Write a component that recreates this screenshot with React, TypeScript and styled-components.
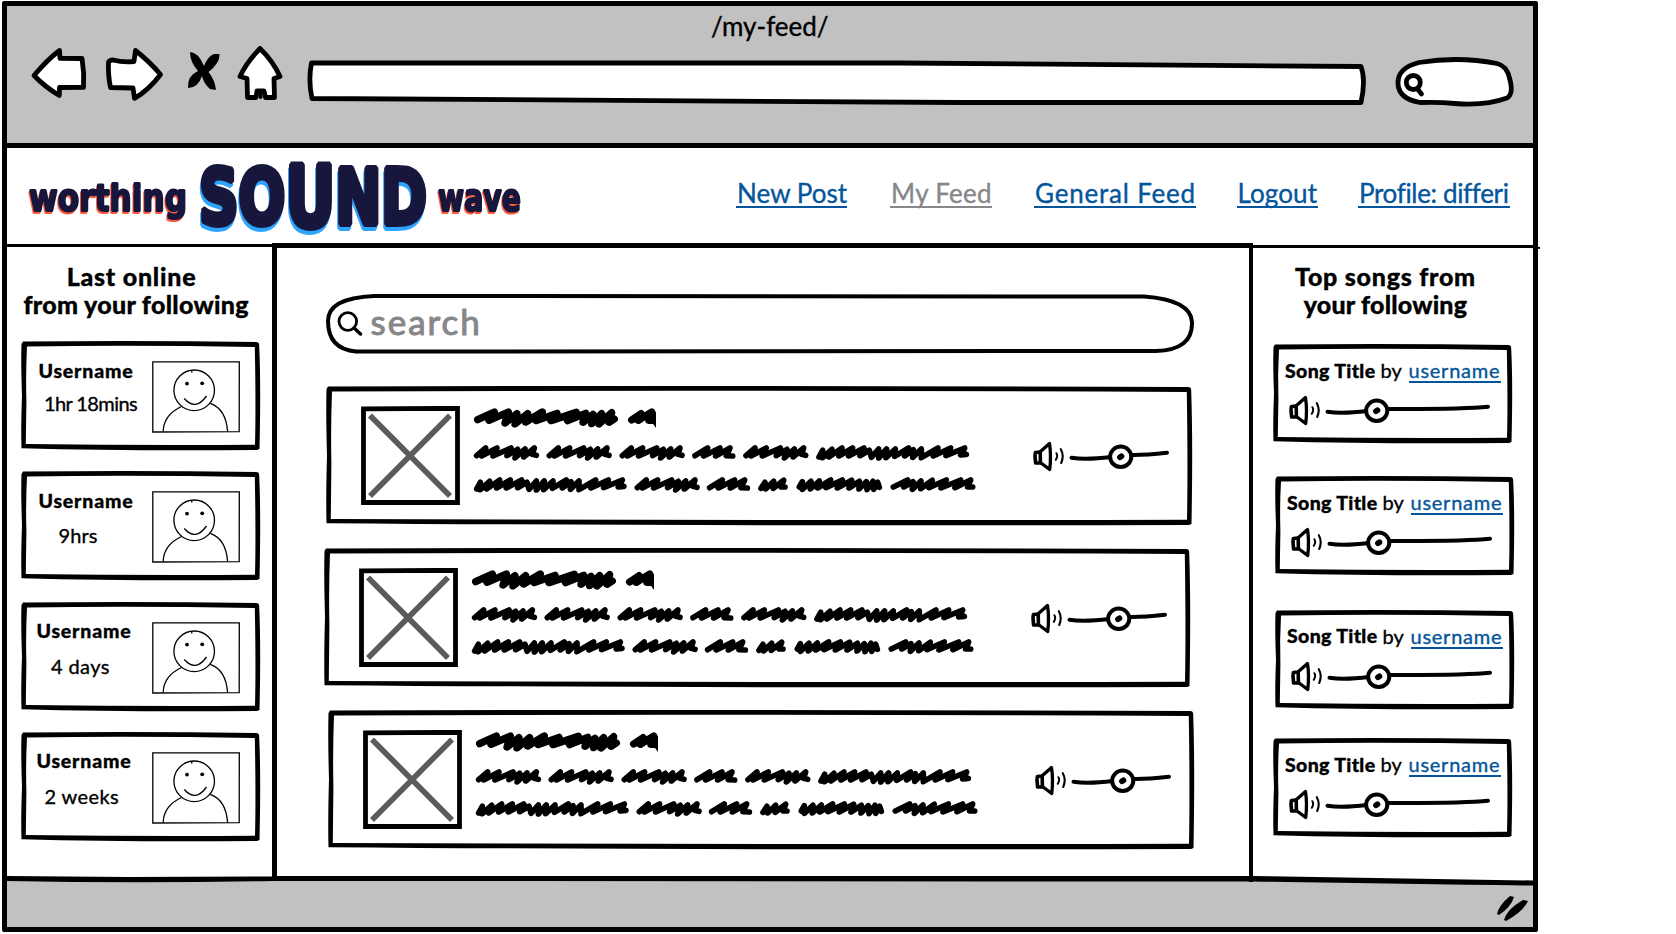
import React from "react";
import styled, { createGlobalStyle, css } from "styled-components";

const GlobalStyle = createGlobalStyle`
  * { box-sizing: border-box; }
  body {
    margin: 0;
    background: #fff;
    color: #000;
    font-family: Lato, "Open Sans", sans-serif;
    -webkit-text-stroke: 0.35px currentColor;
  }
  svg { display: block; flex: none; }
`;

const Window = styled.div`
  position: relative;
  display: flex;
  flex-direction: column;
  width: 1536px;
  height: 931px;
  margin: 1px 0 0 2px;
  border: 5px solid #000;
  border-radius: 2px;
  background: #fff;
`;

const Toolbar = styled.header`
  height: 142px;
  border-bottom: 5px solid #000;
  background: #c1c1c1;
`;

const PageTitle = styled.div`
  height: 40px;
  padding: 4px 0 0 704px;
  font-size: 26px;
  line-height: 32px;
  letter-spacing: 0;
`;

const Controls = styled.div`
  display: flex;
  align-items: flex-start;
`;

const SiteHeader = styled.div`
  display: flex;
  height: 95px;
`;

const Nav = styled.nav`
  display: flex;
  padding: 28.5px 0 0 188px;
`;

const NavLink = styled.a<{ $w: number; $gap: number; $ls: number; $active?: boolean }>`
  height: 31px;
  width: ${(p) => p.$w}px;
  margin-right: ${(p) => p.$gap}px;
  padding-left: 1px;
  border-bottom: 2px solid currentColor;
  color: ${(p) => (p.$active ? "#87868a" : "#04559b")};
  font-size: 26px;
  line-height: 32px;
  letter-spacing: ${(p) => p.$ls}px;
  white-space: nowrap;
`;

const Body = styled.main`
  display: grid;
  grid-template-columns: 265px 981px 280px;
  height: 638px;
`;

const Side = styled.aside<{ $right?: boolean }>`
  position: relative;
  margin-top: ${(p) => (p.$right ? 2 : 1)}px;
  border-top: 3px solid #000;
  padding: ${(p) => (p.$right ? "13.5px 0 0 20px" : "14.5px 0 0 13.5px")};
`;

const SideTitle = styled.h2<{ $right?: boolean }>`
  margin: 0;
  width: ${(p) => (p.$right ? 225 : 222)}px;
  height: ${(p) => (p.$right ? 82.5 : 79)}px;
  text-align: center;
  font-size: 25px;
  font-weight: 900;
  line-height: 28px;
  white-space: nowrap;
`;

const TitleLine = styled.span<{ $ls: number; $indent?: number }>`
  display: block;
  padding-left: ${(p) => p.$indent ?? 0}px;
  letter-spacing: ${(p) => p.$ls}px;
`;

const Overhang = styled.svg`
  position: absolute;
  top: -3px;
  right: -7px;
`;

const Center = styled.section`
  border: solid #000;
  border-width: 5px 4px 0 5px;
  padding: 46px 0 0 49px;
`;

const framed = css`
  position: relative;
  display: flex;
`;

const FrameSvg = styled.svg`
  position: absolute;
  inset: 0;
  overflow: visible;
`;

const OnlineCard = styled.article<{ $gap: number }>`
  ${framed}
  width: 239px;
  height: 109px;
  margin-bottom: ${(p) => p.$gap}px;
`;

const OnlineText = styled.div<{ $pad: number; $top: number }>`
  width: 131.5px;
  padding: ${(p) => p.$top}px 0 0 ${(p) => p.$pad}px;
  white-space: nowrap;
`;

const Strong = styled.strong`
  display: block;
  font-size: 19.5px;
  font-weight: 900;
  line-height: 24px;
  letter-spacing: 0.8px;
`;

const Since = styled.div<{ $x: number; $y: number; $ls: number }>`
  margin: ${(p) => p.$y}px 0 0 ${(p) => p.$x}px;
  font-size: 20px;
  line-height: 24px;
  letter-spacing: ${(p) => p.$ls}px;
`;

const AvatarSvg = styled.svg`
  margin-top: 20px;
`;

const SongCard = styled.article<{ $shift: number; $gap: number }>`
  ${framed}
  flex-direction: column;
  width: 239px;
  height: 99px;
  margin-left: ${(p) => p.$shift}px;
  margin-bottom: ${(p) => p.$gap}px;
  padding: 14px 0 0 12px;
`;

const SongLine = styled.div`
  display: flex;
  height: 37px;
  font-size: 20px;
  line-height: 24px;
  white-space: nowrap;
`;

const SongTitle = styled(Strong)`
  width: 95.5px;
  padding-top: 0.6px;
  letter-spacing: 0.35px;
`;

const By = styled.span`
  width: 28px;
`;

const UserLink = styled.a`
  width: 92px;
  height: 25px;
  border-bottom: 2px solid currentColor;
  color: #04559b;
  letter-spacing: 0.75px;
`;

const SongAudio = styled.div`
  padding-left: 4px;
`;

const SearchBox = styled.label`
  ${framed}
  width: 868px;
  height: 60px;
  padding: 12px 0 0 11px;
  color: #87868a;
  font-size: 35px;
  line-height: 30px;
  letter-spacing: 2px;
  gap: 7.5px;
  -webkit-text-stroke: 1px #87868a;
`;

const Posts = styled.div`
  display: flex;
  flex-direction: column;
  gap: 23px;
  margin-top: 32px;
`;

const PostCard = styled.article<{ $shift: number }>`
  ${framed}
  width: 866px;
  height: 139px;
  margin-left: ${(p) => p.$shift}px;
  padding-left: 35px;
`;

const Thumb = styled.svg`
  margin-top: 20px;
`;

const Scribble = styled.svg`
  margin: 9px 42.5px 0 5px;
`;

const PostAudio = styled.div`
  padding-top: 55px;
`;

const Footer = styled.footer`
  position: relative;
  height: 46px;
  background: #c1c1c1;
`;

const FooterEdge = styled.svg`
  position: absolute;
  left: 0;
  top: -7px;
`;

const Grip = styled.svg`
  position: absolute;
  right: 4px;
  bottom: 6px;
`;

function Frame({ w, h }: { w: number; h: number }) {
  return (
    <FrameSvg width={w} height={h} viewBox={`0 0 ${w} ${h}`}>
      <path
        fillRule="evenodd"
        d={`M2 0.5 Q${w * 0.5} -0.8 ${w - 4} 1 Q${w - 0.5} 1 ${w - 0.8} 5 Q${w + 1} ${h * 0.4} ${w - 0.5} ${h - 1}
        L${w - 3} ${h} Q${w * 0.45} ${h + 1.2} 0.5 ${h - 1.8} Q-0.2 ${h * 0.8} 1 ${h * 0.5} Q-0.2 ${h * 0.2} 0.5 3 Z
        M6 5.4 Q4.6 ${h * 0.3} 5.4 ${h * 0.55} L4.8 ${h - 6} Q${w * 0.5} ${h - 4.4} ${w - 5} ${h - 5.2}
        Q${w - 4} ${h * 0.6} ${w - 5.2} 6 Q${w * 0.5} 4 6 5.4 Z`}
      />
    </FrameSvg>
  );
}

function Avatar() {
  return (
    <AvatarSvg width="89" height="72" viewBox="0 0 89 72" fill="none" stroke="#000" strokeWidth="1.3">
      <path d="M.8.8 L87.3.9 L87.2 70.7 L.8 71 Z" />
      <circle cx="42.2" cy="29.3" r="20.3" />
      <path d="M39.5 9.5 L40 11.5" />
      <path d="M32.3 37.5 Q43.5 50.5 54.5 35" />
      <path d="M29.5 45.5 Q11.5 54 11.2 70.5 M58.3 42.3 Q74 48 75.6 70.5" />
      <circle cx="35" cy="22.6" r="1.9" fill="#000" stroke="none" />
      <circle cx="50.2" cy="22.3" r="1.9" fill="#000" stroke="none" />
    </AvatarSvg>
  );
}

function Audio({ end }: { end: number }) {
  return (
    <svg width={end + 4} height="32" viewBox={`0 0 ${end + 4} 32`} fill="none" stroke="#000" strokeLinecap="round" strokeLinejoin="round">
      <path d="M2.4 11.5 L2 15 L2.6 22 L7.4 22 L7.2 11 Z" strokeWidth="3.6" />
      <path d="M7.5 10.5 L16.5 2.5 Q18.4 15 16.7 28.5 L8 22" strokeWidth="3.3" />
      <path d="M23.4 12.2 Q25.2 15 22.8 18.8" strokeWidth="2" />
      <path d="M27.8 8.2 Q31.4 14.5 28.2 22" strokeWidth="2.1" />
      <path d="M38.5 16.8 Q53 19 78 16" strokeWidth="4" />
      <path d={`M98 14 Q${end - 25} 14.3 ${end - 2} 11.8`} strokeWidth="4" />
      <ellipse cx="87.7" cy="15.8" rx="10.6" ry="10.2" strokeWidth="4" fill="#fff" />
      <path d="M87 16.3 L88.4 15.2" strokeWidth="5.8" />
    </svg>
  );
}

const MEDIUM = "35,182 62,159 50,183 96,159 84,183 138,159 126,182 158,163 150,189 180,162 176,186 208,159 202,178 214,181";
const SHORT = "690,182 728,159 716,183 765,159 752,183 795,159 784,182 803,183";
const LONG =
  "35,186 46,166 46,188 74,163 65,186 104,159 95,183 136,159 124,183 170,159 158,182 186,166 192,187 214,162 214,189 238,162 236,188 264,162 262,184 304,159 292,183 318,164 316,187 342,162 342,188 392,159 378,183 430,159 416,182 472,159 460,180 477,178";

const SCRIBBLES: { points: string; dx: number; dy: number }[] = [
  { points: MEDIUM, dx: 0, dy: 0 },
  { points: MEDIUM, dx: 218, dy: 0 },
  { points: MEDIUM, dx: 437, dy: 0 },
  { points: SHORT, dx: 0, dy: 0 },
  { points: MEDIUM, dx: 808, dy: 0 },
  { points: LONG, dx: 1027, dy: 0 },
  { points: LONG, dx: 0, dy: 96 },
  { points: MEDIUM, dx: 482, dy: 96 },
  { points: SHORT, dx: 44, dy: 96 },
  { points: "888,184 900,166 902,186 926,163 925,184 956,160 948,180 960,180", dx: 0, dy: 96 },
  {
    points:
      "1003,180 1012,164 1012,187 1038,163 1036,186 1063,162 1058,183 1097,159 1083,182 1132,159 1117,183 1160,160 1152,183 1183,163 1182,186 1204,164 1206,188 1224,163 1226,187 1238,166 1243,181",
    dx: 0,
    dy: 96,
  },
  {
    points:
      "1285,180 1328,159 1316,180 1344,164 1342,187 1368,162 1367,185 1402,160 1392,182 1444,159 1428,183 1487,159 1470,182 1517,159 1508,180 1523,180",
    dx: 0,
    dy: 96,
  },
];

function PostText() {
  return (
    <Scribble width="525" height="100" viewBox="0 0 1575 300" fill="none" stroke="#000" strokeLinecap="round" strokeLinejoin="round">
      <g strokeWidth="22">
        <polyline points="38,74 88,51 72,76 130,51 120,84 156,56 150,87 188,56 182,81 232,51 214,77 276,55 258,77 334,52 308,77 362,55 354,82 384,58 380,86 410,56 402,87 440,53 432,82 448,72" />
        <polyline points="500,75 528,56 520,76 560,51 552,76 562,76" />
      </g>
      <path d="M561 41 L573 52 L573 99 L564 86 Z" fill="#000" stroke="none" />
      <g strokeWidth="17">
        {SCRIBBLES.map((s, i) => (
          <polyline key={i} points={s.points} transform={`translate(${s.dx} ${s.dy})`} />
        ))}
      </g>
    </Scribble>
  );
}

const Brand = styled.svg`
  margin-left: 12px;
  overflow: visible;

  text {
    font-family: "DejaVu Sans", sans-serif;
    font-weight: 700;
    fill: #17163c;
    stroke: #17163c;
    stroke-linejoin: bevel;
  }
`;

const SmallWord = styled.g`
  font-size: 38px;
  stroke-width: 2.2px;
  filter: drop-shadow(-0.6px 2px 0 #ff5a3c);
`;

const BigWord = styled.g`
  font-size: 77px;
  stroke-width: 6px;
  filter: drop-shadow(-0.6px 4.2px 0 #2fa4ff);
`;

function Logo() {
  return (
    <Brand width="529" height="94" viewBox="19 148 529 94">
      <SmallWord>
        <text x="29" y="211" textLength="158" lengthAdjust="spacingAndGlyphs">worthing</text>
        <text x="438" y="211" textLength="83" lengthAdjust="spacingAndGlyphs">wave</text>
      </SmallWord>
      <BigWord>
        <text x="199" y="224" textLength="228" lengthAdjust="spacingAndGlyphs">
          SO<tspan fontSize="86" dy="3">U</tspan><tspan dy="-3">ND</tspan>
        </text>
      </BigWord>
    </Brand>
  );
}

function BrowserControls() {
  return (
    <Controls>
      <svg width="1526" height="92" viewBox="7 46 1526 92" fill="#fff" stroke="#000" strokeWidth="4.8" strokeLinejoin="round" strokeLinecap="round">
        <path d="M34 75.5 Q47 60 59.5 50.5 L60 58.3 L82 58.5 Q84.5 73 83.5 87.3 L59.5 87.5 L59.3 95.5 Q45 87 34 75.5 Z" />
        <path d="M108.5 62 Q110 60 113 60 Q123 62.5 134 61.5 L135.5 50.5 Q150 62 160.5 74.5 Q149 90 134.5 98.3 L133 88 L110.5 87.5 Q108 76 108.5 62 Z" />
        <path
          d="M190 52 Q198 52 204 66 Q208 56 214 54 L219.5 54 Q220 63 208.5 72 Q215 80 216 90 L210 89 Q204 84 202 76 Q198 88 188 88 Q187 76 198 71 Q190 62 190 52 Z"
          fill="#000"
          stroke="none"
        />
        <path d="M260 48.5 Q273 61 280 76.5 L274 78.5 L274.5 97.5 L265.5 97.5 L264 91 L257 91 L256 97.5 L247.5 97.5 L247 78.5 L240 76.5 Q246 63 260 48.5 Z" />
        <path d="M260.5 97 L260.5 92" strokeWidth="4" />
        <path d="M311.5 63 L900 63 Q1100 65.5 1361 66.5 Q1366 80 1361 102.5 L960 102.5 Q620 99 312 98.5 Q308 80 311.5 63 Z" />
        <path d="M1398 84 Q1397 68 1419 62.5 Q1459 56 1497 63.5 Q1507 66 1509.5 78 Q1514 94 1507 98 Q1485 106 1455 103.5 Q1440 102 1420 102.5 Q1399 99 1398 84 Z" />
        <circle cx="1413.3" cy="82.5" r="7" />
        <path d="M1417.5 89 L1421.5 94" />
      </svg>
    </Controls>
  );
}

const NAV = [
  { label: "New Post", w: 111, gap: 43, ls: 0.05 },
  { label: "My Feed", w: 102, gap: 42, ls: 0.3, active: true },
  { label: "General Feed", w: 162, gap: 40.5, ls: 0.8 },
  { label: "Logout", w: 81, gap: 40.5, ls: 0.1 },
  { label: "Profile: differi", w: 152, gap: 0, ls: -0.35 },
];

const ONLINE = [
  { since: "1hr 18mins", pad: 18, top: 18.5, x: 5.5, y: 7.5, ls: -0.6, gap: 21 },
  { since: "9hrs", pad: 18, top: 18.5, x: 20, y: 9.5, ls: 0.1, gap: 22.8 },
  { since: "4 days", pad: 16, top: 17, x: 14.5, y: 11, ls: 0.4, gap: 20.7 },
  { since: "2 weeks", pad: 16, top: 17.5, x: 8, y: 11, ls: 0.4, gap: 0 },
];

const SONGS = [
  { shift: 0, gap: 33 },
  { shift: 2, gap: 34.5 },
  { shift: 2, gap: 29.5 },
  { shift: 0, gap: 0 },
];

export default function App() {
  return (
    <>
      <GlobalStyle />
      <Window>
        <Toolbar>
          <PageTitle>/my-feed/</PageTitle>
          <BrowserControls />
        </Toolbar>
        <SiteHeader>
          <Logo />
          <Nav>
            {NAV.map((n) => (
              <NavLink key={n.label} $w={n.w} $gap={n.gap} $ls={n.ls} $active={n.active}>
                {n.label}
              </NavLink>
            ))}
          </Nav>
        </SiteHeader>
        <Body>
          <Side>
            <SideTitle>
              <TitleLine $ls={0.75}>Last online</TitleLine>
              <TitleLine $ls={0.3} $indent={3}>from your following</TitleLine>
            </SideTitle>
            {ONLINE.map((o) => (
              <OnlineCard key={o.since} $gap={o.gap}>
                <Frame w={239} h={109} />
                <OnlineText $pad={o.pad} $top={o.top}>
                  <Strong>Username</Strong>
                  <Since $x={o.x} $y={o.y} $ls={o.ls}>{o.since}</Since>
                </OnlineText>
                <Avatar />
              </OnlineCard>
            ))}
          </Side>
          <Center>
            <SearchBox>
              <FrameSvg width="868" height="60" viewBox="0 0 868 60" fill="none" stroke="#000" strokeWidth="4">
                <path d="M48 2 L818 2.5 Q865 6 866 28 Q867 56 830 57 L30 57.5 Q2 55 2 27 Q2 4 48 2 Z" />
              </FrameSvg>
              <svg width="26" height="30" viewBox="0 0 26 30" fill="none" stroke="#000" strokeWidth="2.8" strokeLinecap="round">
                <circle cx="10.8" cy="15.5" r="8.8" />
                <path d="M17 22 L23.5 28" strokeWidth="3.4" />
              </svg>
              search
            </SearchBox>
            <Posts>
              {[0, -2, 2].map((shift) => (
                <PostCard key={shift} $shift={shift}>
                  <Frame w={866} h={139} />
                  <Thumb width="99" height="99" viewBox="0 0 99 99" fill="none">
                    <path d="M2.5 2.8 L96.5 2.3 V96.5 H2.5 Z" stroke="#000" strokeWidth="4.8" />
                    <path d="M9 9.5 L89 90 M89 9.5 L9 90" stroke="#5b5b5b" strokeWidth="5.6" />
                  </Thumb>
                  <PostText />
                  <PostAudio>
                    <Audio end={136} />
                  </PostAudio>
                </PostCard>
              ))}
            </Posts>
          </Center>
          <Side $right>
            <Overhang width="9" height="5" viewBox="0 0 9 5">
              <path d="M0 1 L9 2 V4 L0 3 Z" />
            </Overhang>
            <SideTitle $right>
              <TitleLine $ls={0.75}>Top songs from</TitleLine>
              <TitleLine $ls={0.2}>your following</TitleLine>
            </SideTitle>
            {SONGS.map((s, i) => (
              <SongCard key={i} $shift={s.shift} $gap={s.gap}>
                <Frame w={239} h={99} />
                <SongLine>
                  <SongTitle>Song Title</SongTitle>
                  <By>by</By>
                  <UserLink>username</UserLink>
                </SongLine>
                <SongAudio>
                  <Audio end={201} />
                </SongAudio>
              </SongCard>
            ))}
          </Side>
        </Body>
        <Footer>
          <FooterEdge width="1526" height="16" viewBox="0 0 1526 16">
            <path d="M1246 0 H1526 V9 L1246 6 Z" fill="#fff" />
            <path d="M1242 0 H1246 V8 H1242 Z" />
            <path d="M0 2 L120 3 L266 2.5 L270 2 H1244 L1526 6.5 V11.5 Q1400 10 1246 7.5 L266 7 Q130 9.5 0 7 Z" />
          </FooterEdge>
          <Grip width="34" height="26" viewBox="0 0 34 26">
            <path d="M2 19 Q4 10 15 1 L19 2 Q16 12 4 20 Z M9 25 Q12 14 28 5 L33 6 Q28 17 11 26 Z" />
          </Grip>
        </Footer>
      </Window>
    </>
  );
}
